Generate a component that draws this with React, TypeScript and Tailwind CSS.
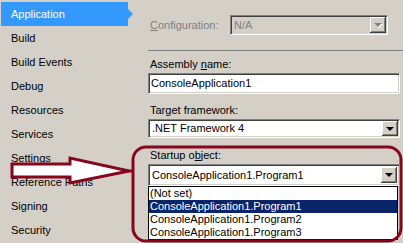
import React from 'react';

const navItems = [
  'Application',
  'Build',
  'Build Events',
  'Debug',
  'Resources',
  'Services',
  'Settings',
  'Reference Paths',
  'Signing',
  'Security',
];

const sunken =
  'border border-t-[#808080] border-l-[#808080] border-b-white border-r-white shadow-[inset_1px_1px_0_#404040,inset_-1px_-1px_0_#d4d0c8]';

function DropButton({ disabled = false }: { disabled?: boolean }) {
  return (
    <div className="w-[16px] self-stretch bg-[#d4d0c8] flex items-center justify-center shadow-[inset_-1px_-1px_0_#404040,inset_1px_1px_0_#ffffff,inset_-2px_-2px_0_#808080]">
      {disabled ? (
        <div className="w-0 h-0 border-x-[4px] border-x-transparent border-t-[4px] border-t-[#808080] drop-shadow-[1px_1px_0_#ffffff]" />
      ) : (
        <div className="w-0 h-0 border-x-[4px] border-x-transparent border-t-[4px] border-t-black" />
      )}
    </div>
  );
}

function Label({ children }: { children: React.ReactNode }) {
  return <div className="h-[13px] leading-[13px] pl-[2px] text-black">{children}</div>;
}

export default function App() {
  return (
    <div
      className="relative w-[403px] h-[243px] bg-[#d4d0c8] flex overflow-hidden text-[11px]"
      style={{ fontFamily: '"Liberation Sans", Arial, sans-serif' }}
    >
      {/* left nav */}
      <div className="w-[148px] shrink-0 flex flex-col pt-[2px]">
        {navItems.map((item, i) =>
          i === 0 ? (
            <div key={item} className="flex items-center h-[24px] pl-[1px]">
              <div className="w-[127px] h-[24px] bg-[#3399ff] text-white flex items-center pl-[10px]">
                {item}
              </div>
              <div className="w-0 h-0 border-y-[5px] border-y-transparent border-l-[5px] border-l-[#3399ff]" />
            </div>
          ) : (
            <div key={item} className="h-[24px] flex items-center pl-[11px] text-black">
              {item}
            </div>
          )
        )}
      </div>

      {/* right panel */}
      <div className="flex-1 flex flex-col pt-[15px]">
        <div className="flex items-center h-[20px] pr-[15px]">
          <div className="w-[82px] pl-[2px] text-[#808080]">
            <span className="underline">C</span>onfiguration:
          </div>
          <div className={`flex-1 h-[20px] flex items-stretch bg-[#d4d0c8] ${sunken} p-px`}>
            <div className="flex-1 pl-[2px] flex items-center text-[#808080]">N/A</div>
            <DropButton disabled />
          </div>
        </div>

        <div className="mt-[15px] h-px bg-[#808080]" />

        <div className="mt-[7px]">
          <Label>
            Assembly <span className="underline">n</span>ame:
          </Label>
        </div>
        <div className={`mt-[2px] mr-[3px] h-[21px] bg-white ${sunken} flex items-center pl-[2px]`}>
          ConsoleApplication1
        </div>

        <div className="mt-[10px]">
          <Label>Target framework:</Label>
        </div>
        <div className={`mt-[2px] mr-[3px] h-[19px] bg-white ${sunken} flex items-stretch p-px`}>
          <div className="flex-1 pl-[2px] flex items-center">.NET Framework 4</div>
          <DropButton />
        </div>

        <div className="mt-[11px]">
          <Label>
            Startup o<span className="underline">b</span>ject:
          </Label>
        </div>
        <div className={`mt-[2px] mr-[3px] h-[22px] bg-white ${sunken} flex items-stretch p-[2px]`}>
          <div className="flex-1 pl-[1px] flex items-center">ConsoleApplication1.Program1</div>
          <DropButton />
        </div>
        <div className="mr-[5px] border border-black bg-white flex flex-col">
          <div className="h-[13px] leading-[13px] pl-px">(Not set)</div>
          <div className="h-[13px] leading-[13px] pl-px bg-[#0a246a] text-white">ConsoleApplication1.Program1</div>
          <div className="h-[13px] leading-[13px] pl-px">ConsoleApplication1.Program2</div>
          <div className="h-[13px] leading-[13px] pl-px">ConsoleApplication1.Program3</div>
        </div>
      </div>

      {/* red annotation overlay */}
      <svg className="absolute inset-0 pointer-events-none" width="403" height="243" viewBox="0 0 403 243">
        <rect x="133" y="147" width="268" height="94" rx="13" fill="none" stroke="#86071d" strokeWidth="3" />
        <path
          d="M12 164 L70 164 L70 158 L129 171 L70 183 L70 177 L12 177 Z"
          fill="#ffffff"
          stroke="#86071d"
          strokeWidth="3"
          strokeLinejoin="miter"
        />
        <line x1="128" y1="171" x2="133" y2="171" stroke="#86071d" strokeWidth="3" />
      </svg>
    </div>
  );
}
